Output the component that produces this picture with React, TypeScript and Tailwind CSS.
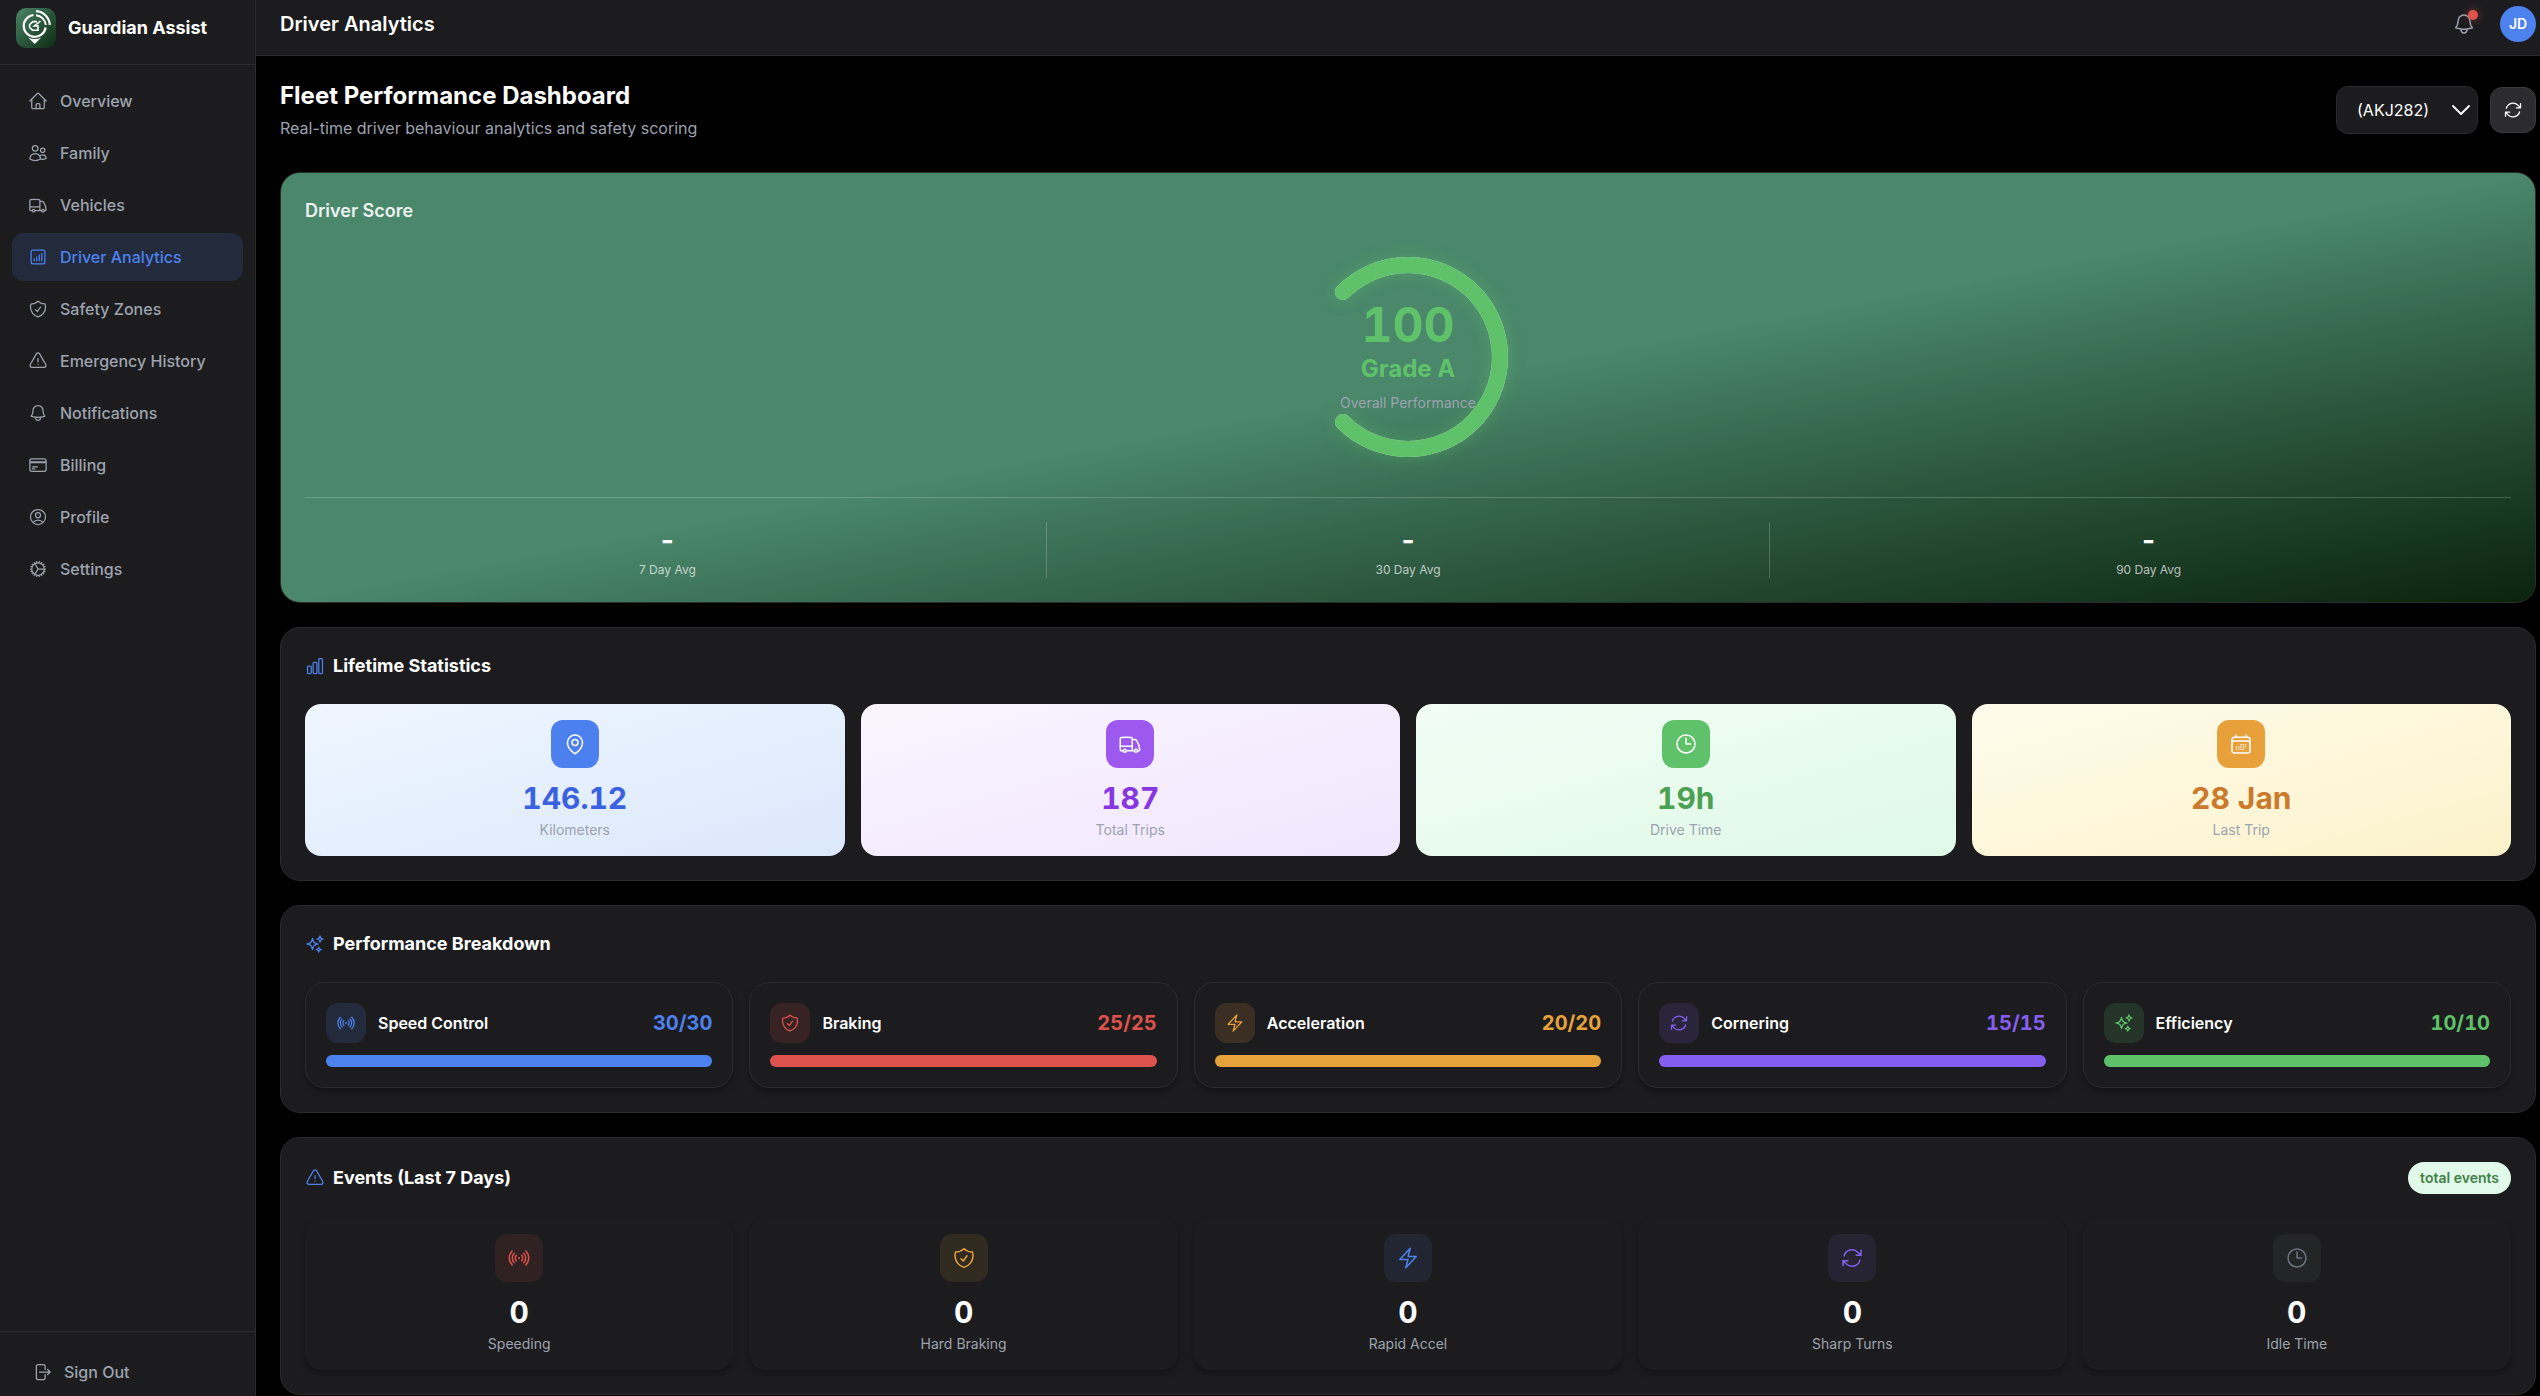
import type { IconType } from 'react-icons';
import {
  HiOutlineArrowPath,
  HiOutlineArrowRightOnRectangle,
  HiOutlineBell,
  HiOutlineBolt,
  HiOutlineCalendarDays,
  HiOutlineChartBar,
  HiOutlineChartBarSquare,
  HiOutlineClock,
  HiOutlineCog,
  HiOutlineCreditCard,
  HiOutlineExclamationTriangle,
  HiOutlineHome,
  HiOutlineMapPin,
  HiOutlineShieldCheck,
  HiOutlineSparkles,
  HiOutlineTruck,
  HiOutlineUserCircle,
  HiOutlineUsers,
} from 'react-icons/hi2';

const SignalIcon = ({ className }: { className?: string }) => (
  <svg
    viewBox="0 0 24 24"
    className={className}
    fill="none"
    stroke="currentColor"
    strokeWidth="1.5"
    strokeLinecap="round"
    strokeLinejoin="round"
  >
    <path d="M9.348 14.652a3.75 3.75 0 0 1 0-5.304m5.304 0a3.75 3.75 0 0 1 0 5.304m-7.425 2.121a6.75 6.75 0 0 1 0-9.546m9.546 0a6.75 6.75 0 0 1 0 9.546M5.106 18.894c-3.808-3.807-3.808-9.98 0-13.788m13.788 0c3.808 3.807 3.808 9.98 0 13.788M12 12h.008v.008H12V12Zm.375 0a.375.375 0 1 1-.75 0 .375.375 0 0 1 .75 0Z" />
  </svg>
);

const navItems: { label: string; icon: IconType; active?: boolean }[] = [
  { label: 'Overview', icon: HiOutlineHome },
  { label: 'Family', icon: HiOutlineUsers },
  { label: 'Vehicles', icon: HiOutlineTruck },
  { label: 'Driver Analytics', icon: HiOutlineChartBarSquare, active: true },
  { label: 'Safety Zones', icon: HiOutlineShieldCheck },
  { label: 'Emergency History', icon: HiOutlineExclamationTriangle },
  { label: 'Notifications', icon: HiOutlineBell },
  { label: 'Billing', icon: HiOutlineCreditCard },
  { label: 'Profile', icon: HiOutlineUserCircle },
  { label: 'Settings', icon: HiOutlineCog },
];

const averages = ['7 Day Avg', '30 Day Avg', '90 Day Avg'];

const lifetimeStats = [
  {
    value: '146.12',
    label: 'Kilometers',
    icon: HiOutlineMapPin,
    card: 'from-[#eff6ff] to-[#dbe8fb]',
    badge: 'bg-[#4c80ee]',
    text: 'text-[#3a61e0]',
  },
  {
    value: '187',
    label: 'Total Trips',
    icon: HiOutlineTruck,
    card: 'from-[#faf5ff] to-[#f0e6fd]',
    badge: 'bg-[#9d58ef]',
    text: 'text-[#8637e0]',
  },
  {
    value: '19h',
    label: 'Drive Time',
    icon: HiOutlineClock,
    card: 'from-[#f2fdf5] to-[#dff9e7]',
    badge: 'bg-[#5fc26a]',
    text: 'text-[#4ba053]',
  },
  {
    value: '28 Jan',
    label: 'Last Trip',
    icon: HiOutlineCalendarDays,
    card: 'from-[#fffbeb] to-[#fbf2ca]',
    badge: 'bg-[#e8a03a]',
    text: 'text-[#cb7a2c]',
  },
];

const breakdown = [
  { label: 'Speed Control', score: 30, max: 30, icon: SignalIcon, tint: 'bg-[#4d82ee]/15', text: 'text-[#4d82ee]', bar: 'bg-[#4d82ee]' },
  { label: 'Braking', score: 25, max: 25, icon: HiOutlineShieldCheck, tint: 'bg-[#dd524c]/15', text: 'text-[#dd524c]', bar: 'bg-[#dd524c]' },
  { label: 'Acceleration', score: 20, max: 20, icon: HiOutlineBolt, tint: 'bg-[#e8a23c]/15', text: 'text-[#e8a23c]', bar: 'bg-[#e8a23c]' },
  { label: 'Cornering', score: 15, max: 15, icon: HiOutlineArrowPath, tint: 'bg-[#845eee]/15', text: 'text-[#845eee]', bar: 'bg-[#845eee]' },
  { label: 'Efficiency', score: 10, max: 10, icon: HiOutlineSparkles, tint: 'bg-[#5fc26a]/15', text: 'text-[#5fc26a]', bar: 'bg-[#5fc26a]' },
];

const events = [
  { label: 'Speeding', count: 0, icon: SignalIcon, tint: 'bg-[#dd524c]/10', text: 'text-[#dd524c]' },
  { label: 'Hard Braking', count: 0, icon: HiOutlineShieldCheck, tint: 'bg-[#e8a23c]/10', text: 'text-[#e8a23c]' },
  { label: 'Rapid Accel', count: 0, icon: HiOutlineBolt, tint: 'bg-[#4d82ee]/10', text: 'text-[#4d82ee]' },
  { label: 'Sharp Turns', count: 0, icon: HiOutlineArrowPath, tint: 'bg-[#845eee]/10', text: 'text-[#845eee]' },
  { label: 'Idle Time', count: 0, icon: HiOutlineClock, tint: 'bg-[#6b7280]/10', text: 'text-[#6b7280]' },
];

const Logo = () => (
  <div className="w-10 h-10 rounded-[10px] bg-gradient-to-br from-[#4a876b] to-[#0f2c12] flex items-center justify-center">
    <svg viewBox="0 0 40 40" className="w-10 h-10" fill="none" stroke="#fff">
      <path d="M17.5 7 A11 11 0 1 0 29.6 19.5" strokeWidth="2.2" />
      <path d="M20 3.2 A14.5 14.5 0 0 1 33.8 17" strokeWidth="2.2" />
      <path d="M20 7.2 A11 11 0 0 1 29.8 17" strokeWidth="2" />
      <path d="M12.2 29.5 Q18.7 32.5 25.2 29.5 L18.7 36 Z" fill="#fff" stroke="none" />
      <path d="M21 13.6 H17 L13.6 16.5 V19.5 L16.5 22.2 H22 V18 H18.5 L24.5 13" strokeWidth="1.6" />
    </svg>
  </div>
);

const Sidebar = () => (
  <aside className="w-64 shrink-0 bg-[#1c1c1e] border-r border-[#2c2c2e] flex flex-col">
    <div className="h-[65px] shrink-0 pt-2 pl-4 pb-4 flex items-center gap-3 border-b border-[#2c2c2e]">
      <Logo />
      <span className="text-lg font-bold">Guardian Assist</span>
    </div>
    <nav className="flex-1 p-3 flex flex-col gap-1">
      {navItems.map((item) => (
        <a
          key={item.label}
          className={`h-12 px-4 flex items-center gap-3 rounded-xl font-medium ${
            item.active ? 'bg-[#4d82ee]/15 text-[#4d82ee]' : 'text-[#9ca3af]'
          }`}
        >
          <item.icon className="w-5 h-5" />
          {item.label}
        </a>
      ))}
    </nav>
    <div className="h-[65px] shrink-0 pl-8 pt-4 flex items-center gap-3 border-t border-[#2c2c2e] text-[#9ca3af] font-medium">
      <HiOutlineArrowRightOnRectangle className="w-5 h-5" />
      Sign Out
    </div>
  </aside>
);

const Header = () => (
  <header className="h-14 shrink-0 pl-6 pr-1 pb-2 flex items-center justify-between bg-[#1c1c1e] border-b border-[#2c2c2e]">
    <h1 className="text-xl font-semibold">Driver Analytics</h1>
    <div className="flex items-center gap-6">
      <div className="relative text-[#9ca3af]">
        <HiOutlineBell className="w-6 h-6" />
        <span className="absolute -top-0.5 -right-0.5 w-2.5 h-2.5 rounded-full bg-[#e0524c] shadow-[0_0_8px_rgba(224,82,76,0.5)]" />
      </div>
      <div className="w-9 h-9 rounded-full bg-[#4d82ee] flex items-center justify-center text-sm font-semibold">JD</div>
    </div>
  </header>
);

const SectionTitle = ({ icon: Icon, children }: { icon: IconType; children: string }) => (
  <h3 className="flex items-center gap-2 text-lg font-bold">
    <Icon className="w-5 h-5 text-[#4d82ee]" />
    {children}
  </h3>
);

const ScoreRing = () => (
  <div className="relative w-[200px] h-[200px]">
    <svg viewBox="0 0 200 200" className="w-full h-full overflow-visible" fill="none" strokeWidth="16" strokeLinecap="round">
      <path d="M34.95 34.95 A92 92 0 1 1 34.95 165.05" stroke="#e5e7eb" />
      <path
        d="M34.95 34.95 A92 92 0 1 1 34.95 165.05"
        stroke="#5fc26a"
        className="drop-shadow-[0_0_8px_rgba(95,194,106,0.4)]"
      />
    </svg>
    <div className="absolute inset-0 flex flex-col items-center justify-center text-[#5fc26a]">
      <span className="text-5xl leading-none font-bold tabular-nums">100</span>
      <span className="mt-1 text-2xl font-bold">Grade A</span>
      <span className="mt-2 text-sm text-[#9ca3af]">Overall Performance</span>
    </div>
  </div>
);

const DriverScore = () => (
  <section className="h-[431px] p-6 rounded-[20px] border border-[#2c2c2e] bg-gradient-to-br from-[#4a876b] via-[#4a876b] via-50% to-[#0b230d]">
    <h3 className="text-lg font-semibold text-white/90">Driver Score</h3>
    <div className="pt-8 pb-10 flex justify-center">
      <ScoreRing />
    </div>
    <div className="pt-6 grid grid-cols-3 gap-4 border-t border-white/20">
      {averages.map((label, i) => (
        <div key={label} className={`text-center ${i === 1 ? 'border-x border-white/20' : ''}`}>
          <div className="h-9 text-[28px] leading-9 font-bold">-</div>
          <div className="mt-1 text-xs text-white/70">{label}</div>
        </div>
      ))}
    </div>
  </section>
);

const LifetimeStatistics = () => (
  <section className="p-6 rounded-[20px] bg-[#1c1c1e] border border-[#2c2c2e]">
    <SectionTitle icon={HiOutlineChartBar}>Lifetime Statistics</SectionTitle>
    <div className="mt-6 grid grid-cols-4 gap-4">
      {lifetimeStats.map((stat) => (
        <div key={stat.label} className={`p-4 rounded-2xl bg-gradient-to-br flex flex-col items-center ${stat.card}`}>
          <div className={`w-12 h-12 rounded-xl flex items-center justify-center ${stat.badge}`}>
            <stat.icon className="w-6 h-6" />
          </div>
          <div className={`mt-3 text-3xl leading-9 font-bold tabular-nums ${stat.text}`}>{stat.value}</div>
          <div className="mt-1 text-sm text-[#9ca3af]">{stat.label}</div>
        </div>
      ))}
    </div>
  </section>
);

const PerformanceBreakdown = () => (
  <section className="p-6 rounded-[20px] bg-[#1c1c1e] border border-[#2c2c2e]">
    <SectionTitle icon={HiOutlineSparkles}>Performance Breakdown</SectionTitle>
    <div className="mt-6 grid grid-cols-5 gap-4">
      {breakdown.map((item) => (
        <div key={item.label} className="p-5 rounded-[20px] border border-[#2c2c2e] shadow-[0_4px_6px_rgba(0,0,0,0.3)] bg-[#1c1c1e]">
          <div className="flex items-center gap-3">
            <div className={`w-10 h-10 rounded-xl flex items-center justify-center ${item.tint} ${item.text}`}>
              <item.icon className="w-5 h-5" />
            </div>
            <span className="flex-1 font-semibold">{item.label}</span>
            <span className={`text-xl font-bold tabular-nums ${item.text}`}>
              {item.score}/{item.max}
            </span>
          </div>
          <div className="mt-3 h-3 rounded-full bg-[#2c2c2e]">
            <div className={`h-3 rounded-full ${item.bar}`} style={{ width: `${(item.score / item.max) * 100}%` }} />
          </div>
        </div>
      ))}
    </div>
  </section>
);

const Events = () => (
  <section className="p-6 rounded-[20px] bg-[#1c1c1e] border border-[#2c2c2e]">
    <div className="flex items-center justify-between">
      <SectionTitle icon={HiOutlineExclamationTriangle}>Events (Last 7 Days)</SectionTitle>
      <span className="h-8 px-3 flex items-center rounded-full bg-[#e0f9e8] text-sm font-semibold text-[#428048]">total events</span>
    </div>
    <div className="mt-6 grid grid-cols-5 gap-4">
      {events.map((event) => (
        <div key={event.label} className="p-4 rounded-2xl bg-[#1c1c1e] shadow-[0_4px_6px_rgba(0,0,0,0.3)] flex flex-col items-center">
          <div className={`w-12 h-12 rounded-xl flex items-center justify-center ${event.tint} ${event.text}`}>
            <event.icon className="w-6 h-6" />
          </div>
          <div className="mt-3 text-3xl leading-9 font-bold tabular-nums">{event.count}</div>
          <div className="mt-1 text-sm text-[#9ca3af]">{event.label}</div>
        </div>
      ))}
    </div>
  </section>
);

const App = () => {
  return (
    <div className="h-screen flex overflow-hidden bg-black text-white font-['Inter',sans-serif]">
      <Sidebar />
      <div className="flex-1 flex flex-col">
        <Header />
        <main className="flex-1 pt-6 pl-6 pr-1 flex flex-col gap-6">
          <div className="mb-2 flex items-center justify-between">
            <div>
              <h2 className="text-2xl font-bold">Fleet Performance Dashboard</h2>
              <p className="mt-1 text-[#9ca3af]">Real-time driver behaviour analytics and safety scoring</p>
            </div>
            <div className="flex items-center gap-3">
              <button className="w-[142px] h-12 pl-5 pr-1.5 flex items-center justify-between rounded-xl bg-[#1c1c1e] border border-[#2c2c2e]">
                (AKJ282)
                <svg viewBox="0 0 20 20" className="w-5 h-5" fill="none" stroke="currentColor" strokeWidth="1.8" strokeLinecap="round" strokeLinejoin="round">
                  <path d="M2 6 L10 14 L18 6" />
                </svg>
              </button>
              <button className="w-[46px] h-[46px] flex items-center justify-center rounded-xl bg-[#2c2c2e] border border-[#3a3a3c]">
                <HiOutlineArrowPath className="w-5 h-5" />
              </button>
            </div>
          </div>
          <DriverScore />
          <LifetimeStatistics />
          <PerformanceBreakdown />
          <Events />
        </main>
      </div>
    </div>
  );
};

export default App;
